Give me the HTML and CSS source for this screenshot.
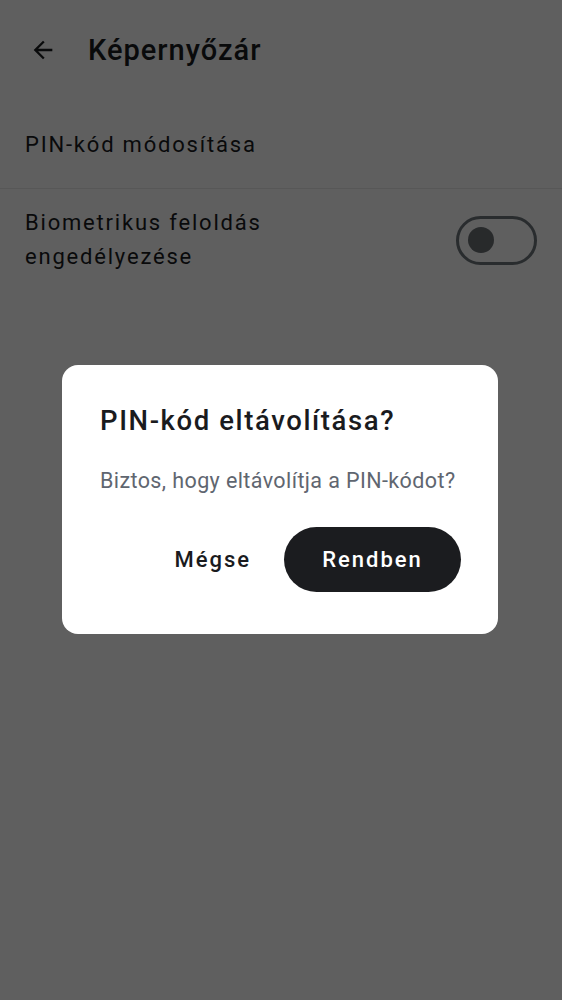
FILE: index.html
```html
<!DOCTYPE html>
<html lang="hu">
<head>
<meta charset="utf-8">
<link rel="stylesheet" href="styles.css">
</head>
<body>
<div class="screen">
  <header class="appbar">
    <button class="back" aria-label="Vissza">
      <svg width="28" height="28" viewBox="0 0 24 24"><path d="M20 11H7.83l5.59-5.59L12 4l-8 8 8 8 1.41-1.41L7.83 13H20v-2z" fill="currentColor"/></svg>
    </button>
    <h1 class="title">Képernyőzár</h1>
  </header>
  <div class="row row-single">PIN-kód módosítása</div>
  <div class="row row-toggle">
    <span class="label">Biometrikus feloldás<br>engedélyezése</span>
    <span class="switch"><span class="knob"></span></span>
  </div>
</div>
<div class="scrim">
  <div class="dialog">
    <h2 class="dlg-title">PIN-kód eltávolítása?</h2>
    <p class="dlg-body">Biztos, hogy eltávolítja a PIN-kódot?</p>
    <div class="actions">
      <button class="btn btn-text">Mégse</button>
      <button class="btn btn-filled">Rendben</button>
    </div>
  </div>
</div>
</body>
</html>
```
FILE: styles.css
```css
html, body {
  margin: 0;
  padding: 0;
}
body {
  width: 562px;
  height: 1000px;
  background: #ffffff;
  font-family: Roboto, "Noto Sans", sans-serif;
  color: #1a1b1e;
  position: relative;
  overflow: hidden;
}
.screen {
  display: flex;
  flex-direction: column;
}
.appbar {
  display: flex;
  align-items: center;
  height: 100px;
  padding-left: 28px;
  gap: 30px;
}
.back {
  border: 0;
  background: none;
  padding: 0;
  color: #1a1b1e;
  display: flex;
  width: 30px;
  height: 30px;
  align-items: center;
  justify-content: center;
}
.title {
  margin: 0;
  font-size: 29px;
  font-weight: 500;
  letter-spacing: 1px;
}
.row {
  padding: 0 25px;
  font-size: 22px;
  letter-spacing: 1.8px;
  color: #1a1b1e;
}
.row-single {
  height: 88px;
  display: flex;
  align-items: center;
  border-bottom: 1px solid #e8e8e8;
}
.row-toggle {
  display: flex;
  align-items: center;
  justify-content: space-between;
  padding-top: 17px;
  padding-bottom: 17px;
  line-height: 34px;
}
.switch {
  width: 66px;
  height: 43px;
  border: 3px solid #6f767d;
  border-radius: 26px;
  display: flex;
  align-items: center;
  padding-left: 9px;
  box-sizing: content-box;
}
.knob {
  width: 26px;
  height: 26px;
  border-radius: 50%;
  background: #6b7075;
}
.scrim {
  position: absolute;
  inset: 0;
  background: rgba(0, 0, 0, 0.627);
  display: flex;
  justify-content: center;
  padding-top: 365px;
  box-sizing: border-box;
}
.dialog {
  width: 436px;
  height: 269px;
  box-sizing: border-box;
  background: #ffffff;
  border-radius: 16px;
  padding: 38px 37px 0 38px;
  display: flex;
  flex-direction: column;
  margin-right: 2px;
}
.dlg-title {
  margin: 0;
  font-size: 27.5px;
  font-weight: 500;
  line-height: 36px;
  letter-spacing: 1.6px;
  color: #1a1b1e;
}
.dlg-body {
  margin: 28px 0 0 0;
  font-size: 21.5px;
  line-height: 28px;
  letter-spacing: 0.4px;
  color: #5f6670;
  white-space: nowrap;
}
.actions {
  display: flex;
  justify-content: flex-end;
  align-items: center;
  gap: 33px;
  margin-top: 32px;
}
.btn {
  font-family: Roboto, "Noto Sans", sans-serif;
  font-size: 22px;
  font-weight: 500;
  letter-spacing: 2px;
  border: 0;
  cursor: pointer;
}
.btn-text {
  background: none;
  color: #1a1b1e;
  padding: 0;
}
.btn-filled {
  background: #1b1c1f;
  color: #ffffff;
  width: 177px;
  height: 65px;
  border-radius: 33px;
}
```
